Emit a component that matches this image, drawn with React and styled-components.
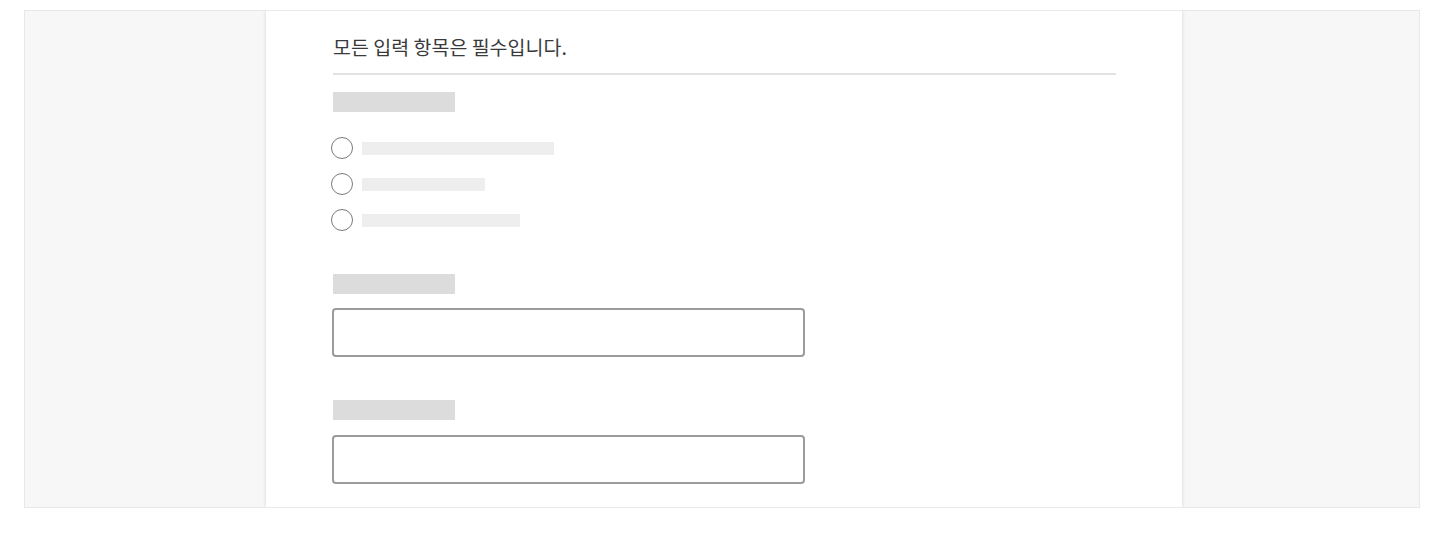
import React from "react"
import styled, { createGlobalStyle } from "styled-components"

const Global = createGlobalStyle`
  body {
    margin: 0;
    background: #ffffff;
    font-family: "Noto Sans CJK KR", "Noto Sans", sans-serif;
  }
`

const Frame = styled.div`
  box-sizing: border-box;
  margin: 10px 0 0 24px;
  width: 1396px;
  height: 498px;
  border: 1px solid #e8e8e8;
  background: #f7f7f7;
  display: grid;
  grid-template-columns: 241px 916px 1fr;
  overflow: hidden;
`

const Side = styled.div`
  background: #f7f7f7;
`

const Panel = styled.main`
  background: #ffffff;
  box-shadow: 0 0 4px rgba(0, 0, 0, 0.14);
  padding: 0 66px 0 67px;
  position: relative;
  z-index: 1;
`

const Title = styled.h2`
  margin: 0;
  padding: 23px 0 13px;
  border-bottom: 2px solid #e2e2e2;
  font-size: 19.5px;
  line-height: 26px;
  font-weight: 400;
  color: #3a3a3a;
`

const Label = styled.div`
  width: 122px;
  height: 20px;
  background: #dcdcdc;
  margin-top: ${p => p.$top}px;
`

const Options = styled.ul`
  list-style: none;
  margin: 18px 0 0;
  padding: 0;
`

const Option = styled.li`
  height: 36px;
  display: flex;
  align-items: center;
  gap: 9px;
  margin-left: -2px;
`

const Radio = styled.span`
  box-sizing: border-box;
  width: 22px;
  height: 22px;
  border-radius: 50%;
  border: 1px solid #7a7a7a;
  background: #fff;
`

const Bar = styled.span`
  height: 13px;
  background: #eeeeee;
`

const Input = styled.div`
  box-sizing: border-box;
  width: 473px;
  height: 49px;
  margin: ${p => p.$top}px 0 0 -1px;
  border: 2px solid #9b9b9b;
  border-radius: 4px;
  background: #fff;
`

const options = [192, 123, 158]

export default function App() {
  return (
    <>
      <Global />
      <Frame>
        <Side />
        <Panel>
          <Title>모든 입력 항목은 필수입니다.</Title>
          <Label $top={17} />
          <Options>
            {options.map((w, i) => (
              <Option key={i}>
                <Radio />
                <Bar style={{ width: w }} />
              </Option>
            ))}
          </Options>
          <Label $top={36} />
          <Input $top={14} />
          <Label $top={43} />
          <Input $top={15} />
        </Panel>
        <Side />
      </Frame>
    </>
  )
}
